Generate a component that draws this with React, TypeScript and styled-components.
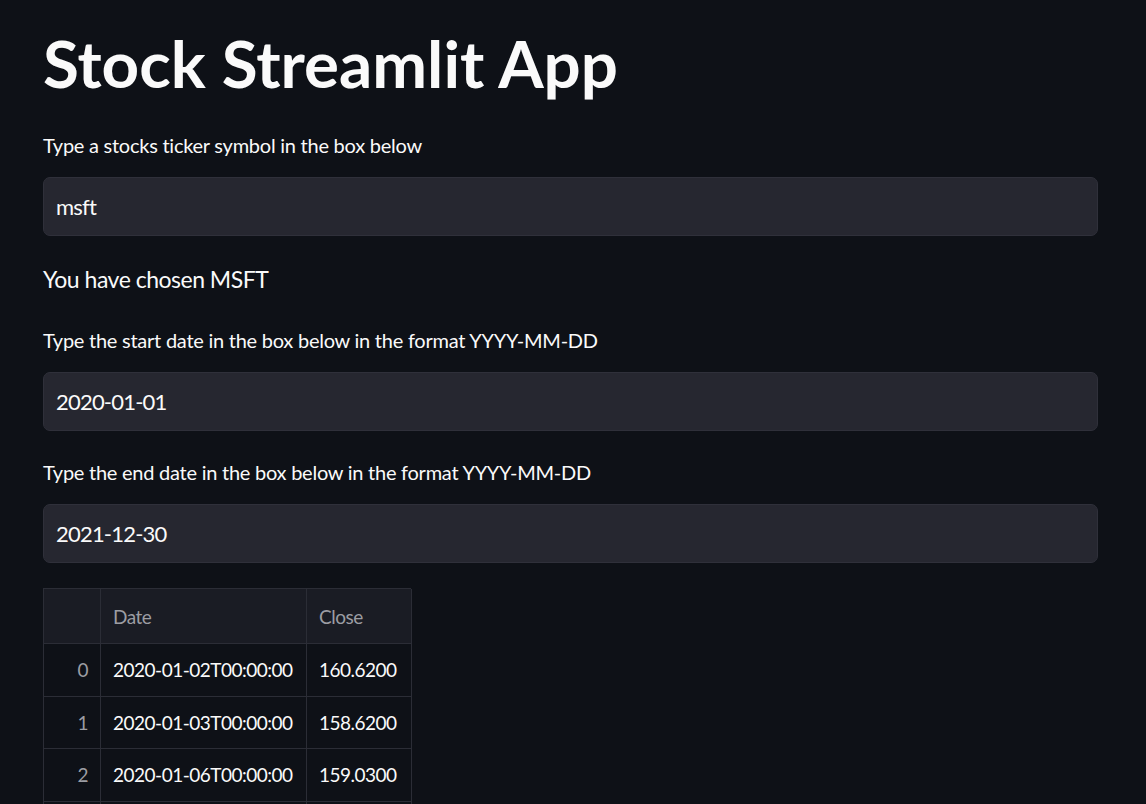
import React from "react";
import styled, { createGlobalStyle } from "styled-components";

const Global = createGlobalStyle`
  html, body { margin: 0; padding: 0; background: #0e1117; }
  body { font-family: Lato, "Noto Sans", sans-serif; color: #fafafa; }
  * { box-sizing: border-box; }
`;

const Page = styled.main`
  display: flex;
  flex-direction: column;
  padding: 24px 48px 0 43px;
  height: 804px;
  overflow: hidden;
`;

const Title = styled.h1`
  margin: 0 0 28px 0;
  font-size: 65.5px;
  line-height: 78px;
  font-weight: 700;
  letter-spacing: 0;
  color: #fafafa;
`;

const Widget = styled.section<{ $gap?: number }>`
  display: flex;
  flex-direction: column;
  gap: 17px;
  margin-bottom: ${(p) => p.$gap ?? 26}px;
`;

const Label = styled.label`
  font-size: 20px;
  line-height: 30px;
  letter-spacing: -0.25px;
  color: #fafafa;
`;

const Input = styled.input`
  height: 59px;
  width: 100%;
  background: #262730;
  border: 1px solid #2f303a;
  border-radius: 7px;
  padding: 0 12px;
  font-family: Lato, "Noto Sans", sans-serif;
  font-size: 22px;
  letter-spacing: -0.8px;
  color: #fafafa;
  outline: none;
`;

const Text = styled.p`
  margin: 0 0 28px 0;
  font-size: 23px;
  line-height: 36px;
  letter-spacing: -0.5px;
`;

const Table = styled.div`
  display: grid;
  grid-template-columns: 57px 206px 105px;
  width: 368px;
  border: 1px solid #2b2d36;
  border-right: none;
  border-bottom: none;
`;

const Cell = styled.div<{ $head?: boolean; $index?: boolean }>`
  height: ${(p) => (p.$head ? 55 : 52.5)}px;
  display: flex;
  align-items: center;
  justify-content: ${(p) => (p.$index ? "flex-end" : "flex-start")};
  padding: 0 12px;
  border-right: 1px solid #2b2d36;
  border-bottom: 1px solid #2b2d36;
  background: ${(p) => (p.$head ? "#1a1c24" : "#0e1117")};
  color: ${(p) => (p.$head || p.$index ? "#9c9da3" : "#fafafa")};
  font-size: 19px;
  letter-spacing: -0.5px;
  white-space: nowrap;
  overflow: hidden;
`;

const rows = [
  ["2020-01-02T00:00:00", "160.6200"],
  ["2020-01-03T00:00:00", "158.6200"],
  ["2020-01-06T00:00:00", "159.0300"],
  ["2020-01-07T00:00:00", "157.5800"],
  ["2020-01-08T00:00:00", "160.0900"],
];

export default function App() {
  return (
    <>
      <Global />
      <Page>
        <Title>Stock Streamlit App</Title>
        <Widget $gap={25}>
          <Label>Type a stocks ticker symbol in the box below</Label>
          <Input defaultValue="msft" />
        </Widget>
        <Text>You have chosen MSFT</Text>
        <Widget>
          <Label>Type the start date in the box below in the format YYYY-MM-DD</Label>
          <Input defaultValue="2020-01-01" />
        </Widget>
        <Widget $gap={25}>
          <Label>Type the end date in the box below in the format YYYY-MM-DD</Label>
          <Input defaultValue="2021-12-30" />
        </Widget>
        <Table>
          <Cell $head />
          <Cell $head>Date</Cell>
          <Cell $head>Close</Cell>
          {rows.map((r, i) => (
            <React.Fragment key={i}>
              <Cell $index>{i}</Cell>
              <Cell>{r[0]}</Cell>
              <Cell>{r[1]}</Cell>
            </React.Fragment>
          ))}
        </Table>
      </Page>
    </>
  );
}
